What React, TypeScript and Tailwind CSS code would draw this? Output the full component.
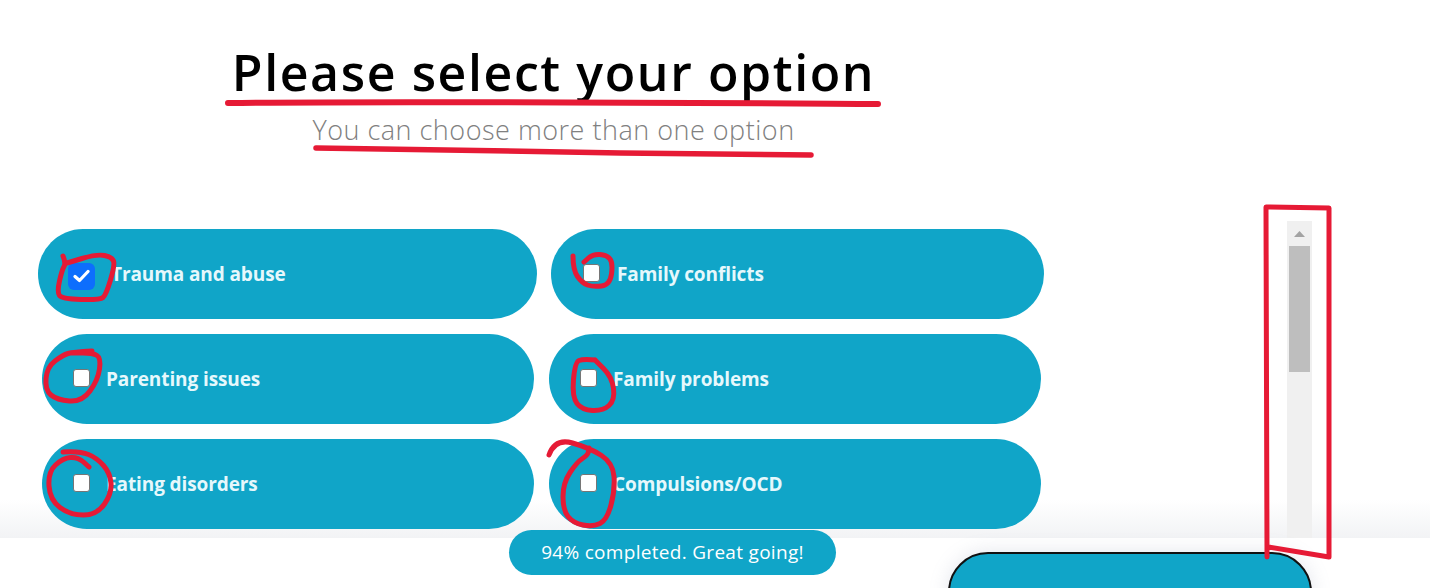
import React from "react";

type P = [number, number];

function smooth(pts: P[]): string {
  let d = `M${pts[0][0]} ${pts[0][1]}`;
  for (let i = 1; i < pts.length - 1; i++) {
    const mx = (pts[i][0] + pts[i + 1][0]) / 2;
    const my = (pts[i][1] + pts[i + 1][1]) / 2;
    d += ` Q${pts[i][0]} ${pts[i][1]} ${mx} ${my}`;
  }
  const l = pts[pts.length - 1];
  return d + ` L${l[0]} ${l[1]}`;
}

const scribbles: P[][] = [
  [[63,256],[66,263],[62,270],[57,292],[62,299],[100,300],[106,295],[115,265],[112,257],[97,254],[67,263]],
  [[92,351],[73,352],[63,355],[47,367],[45,390],[57,400],[82,402],[98,380],[101,358],[93,353],[73,353]],
  [[573,256],[573,270],[582,283],[593,287],[610,285],[613,263],[607,255],[593,254],[584,262]],
  [[595,360],[583,359],[575,362],[572,397],[582,410],[603,411],[615,400],[612,377],[595,360]],
  [[63,452],[80,451],[97,458],[110,473],[112,493],[97,515],[70,515],[50,500],[48,472],[63,458],[78,457],[89,467]],
  [[549,455],[555,438],[590,448],[613,463],[615,490],[607,520],[593,527],[573,523],[563,510],[563,483],[577,462],[588,455],[589,448]],
];

function Pill({ label, width, pad, gap, checked }: { label: string; width: string; pad: string; gap: string; checked?: boolean }) {
  return (
    <label className={`flex h-[90px] items-center rounded-[45px] bg-[#10a5c8] ${width} ${pad} ${gap}`}>
      {checked ? (
        <span className="flex h-[27px] w-[27px] translate-y-[2px] items-center justify-center rounded-[6px] bg-[#0d6efd]">
          <svg width="17" height="14" viewBox="0 0 17 14" fill="none">
            <path d="M2 7.5 L6.5 11.5 L15 2.5" stroke="#fff" strokeWidth="3.2" strokeLinecap="round" strokeLinejoin="round" />
          </svg>
        </span>
      ) : (
        <span className="h-[18px] w-[17px] -translate-y-[1px] rounded-[3px] border border-[#767676] bg-white" />
      )}
      <span className="text-[19px] font-bold tracking-[-0.1px] text-[#e6f8fc]">{label}</span>
    </label>
  );
}

export default function App() {
  return (
    <div className="relative h-[588px] w-[1430px] overflow-hidden bg-white font-['Open_Sans','Noto_Sans',sans-serif]">
      <div className="absolute inset-x-0 top-[500px] h-[38px] bg-gradient-to-b from-white to-[#f2f3f5]" />

      <div className="relative flex h-[538px]">
        <main className="w-[1287px]">
          <header className="w-[1107px] pt-[38px] text-center">
            <h1 className="text-[50px] font-semibold leading-[68px] tracking-[1.6px] text-black">Please select your option</h1>
            <p className="mt-[6px] text-[27px] font-light leading-[36px] tracking-[0.5px] text-[#808080]">You can choose more than one option</p>
          </header>
          <div className="mt-[81px] flex flex-col gap-[15px]">
            <div className="ml-[38px] flex gap-[14px]">
              <Pill label="Trauma and abuse" width="w-[499px]" pad="pl-[30px]" gap="gap-[16px]" checked />
              <Pill label="Family conflicts" width="w-[493px]" pad="pl-[32px]" gap="gap-[17px]" />
            </div>
            <div className="ml-[42px] flex gap-[15px]">
              <Pill label="Parenting issues" width="w-[492px]" pad="pl-[31px]" gap="gap-[16px]" />
              <Pill label="Family problems" width="w-[492px]" pad="pl-[31px]" gap="gap-[16px]" />
            </div>
            <div className="ml-[42px] flex gap-[15px]">
              <Pill label="Eating disorders" width="w-[492px]" pad="pl-[31px]" gap="gap-[16px]" />
              <Pill label="Compulsions/OCD" width="w-[492px]" pad="pl-[31px]" gap="gap-[16px]" />
            </div>
          </div>
        </main>
        <div className="mt-[221px] flex h-[317px] w-[25px] flex-col items-center bg-[#f0f0f0]">
          <svg className="mt-[10px]" width="11" height="6" viewBox="0 0 11 6"><path d="M5.5 0 L11 6 H0 Z" fill="#a3a3a3" /></svg>
          <div className="mt-[9px] h-[126px] w-[21px] bg-[#bebebe]" />
        </div>
      </div>

      <div className="absolute left-[509px] top-[530px] flex h-[45px] w-[327px] items-center justify-center rounded-[23px] bg-[#10a5c8] text-[19px] tracking-[0.3px] text-white">
        94% completed. Great going!
      </div>

      <button className="absolute left-[948px] top-[552px] h-[80px] w-[364px] rounded-[44px] border-2 border-[#111] bg-[#10a5c8] pt-[20px] text-[32px] font-bold text-white shadow-[0_0_20px_rgba(120,130,160,0.2)]">
        Submit
      </button>

      <svg className="pointer-events-none absolute left-0 top-0" width="1430" height="588" fill="none" stroke="#e61a35" strokeLinecap="round" strokeLinejoin="round">
        <path d="M228 103 C400 101 700 103 878 104" strokeWidth="6" />
        <path d="M316 148 C450 150 650 154 811 155" strokeWidth="5.5" />
        {scribbles.map((s, i) => (
          <path key={i} d={smooth(s)} strokeWidth="5" />
        ))}
        <path d="M1267 557 L1266 207 L1329 208 L1329 557 L1268 547" strokeWidth="5" />
      </svg>
    </div>
  );
}
